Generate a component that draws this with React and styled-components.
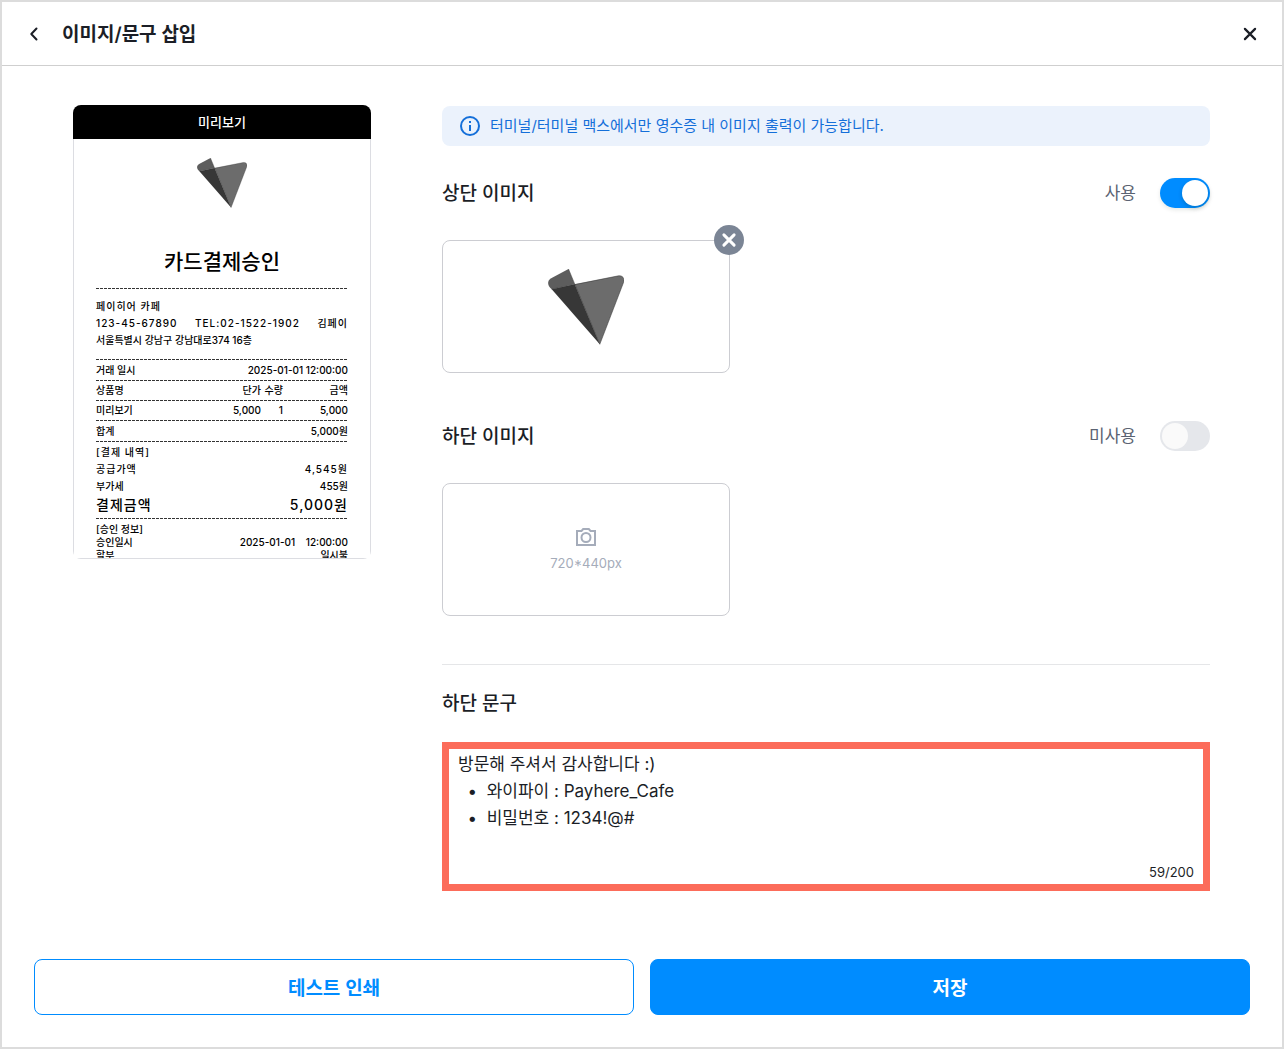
import React, { useState } from 'react';
import styled, { createGlobalStyle } from 'styled-components';

const MAX_LENGTH = 200;
const BLUE = '#008cff';
const INK = '#1b1e26';

const INITIAL_MESSAGE = [
  '방문해 주셔서 감사합니다 :)',
  '  •  와이파이 : Payhere_Cafe',
  '  •  비밀번호 : 1234!@#',
].join('\n');

const GlobalStyle = createGlobalStyle`
  *, *::before, *::after {
    box-sizing: border-box;
  }

  body {
    margin: 0;
    background: #fff;
    color: ${INK};
    font-family: Inter, 'Noto Sans CJK KR', sans-serif;
  }

  button, textarea {
    font-family: inherit;
    color: inherit;
  }

  h1, h2, p {
    margin: 0;
  }
`;

const Logo = ({ size }) => (
  <svg width={size} height={size} viewBox="0 1 76 76" aria-hidden="true">
    <path
      d="M20.5 1 L26.7 16.3 L3.7 21.2 C-1 17.5 -1 12.5 3.2 10.2 Z"
      fill="#5d5d5d"
    />
    <path
      d="M26.7 16.3 L70.5 7.8 C74.5 7.3 77 10.3 75.6 14.3 L51.8 76.3 Z"
      fill="#6c6c6c"
    />
    <path d="M3.7 21.2 L26.7 16.3 L51.8 76.3 Z" fill="#373737" />
    <path
      d="M20.5 1 L51.8 76.3 L75.6 14.3 C77 10.3 74.5 7.3 70.5 7.8 L3.7 21.2"
      fill="none"
      stroke="#333"
      strokeWidth="0.5"
    />
  </svg>
);

const BackIcon = () => (
  <svg width="24" height="24" viewBox="0 0 24 24" fill="none" stroke={INK} strokeWidth="2">
    <path d="M14.5 6.5 L9.3 12 L14.5 17.5" strokeLinecap="round" strokeLinejoin="round" />
  </svg>
);

const CrossIcon = ({ width = 2.2 }) => (
  <svg width="24" height="24" viewBox="0 0 24 24" fill="none" stroke="currentColor" strokeWidth={width}>
    <path d="M6.9 6.9 L17.1 17.1 M17.1 6.9 L6.9 17.1" strokeLinecap="round" />
  </svg>
);

const InfoIcon = () => (
  <svg width="20" height="20" viewBox="0 0 20 20" fill="none" aria-hidden="true">
    <circle cx="10" cy="10" r="9" stroke="currentColor" strokeWidth="2" />
    <path d="M10 9 V15 M10 5 V7" stroke="currentColor" strokeWidth="2" />
  </svg>
);

const CameraIcon = () => (
  <svg width="20" height="18" viewBox="0 0 20 18" fill="none" stroke="currentColor" strokeWidth="2" aria-hidden="true">
    <path d="M1 3 H5.5 L7.2 1 H12.8 L14.5 3 H19 V17 H1 Z" />
    <circle cx="10" cy="9.5" r="4.5" />
  </svg>
);

const Frame = styled.div`
  display: flex;
  flex-direction: column;
  min-height: 100vh;
  border: 2px solid #dcdcdc;
`;

const Header = styled.header`
  display: flex;
  align-items: center;
  gap: 16px;
  height: 64px;
  padding: 0 20px;
  border-bottom: 1px solid #cfcfcf;
`;

const IconButton = styled.button`
  display: flex;
  padding: 0;
  border: none;
  background: none;
  cursor: pointer;
`;

const Title = styled.h1`
  flex: 1;
  padding-top: 2px;
  font-size: 19px;
  font-weight: 600;
  line-height: 30px;
`;

const Body = styled.main`
  flex: 1;
  display: flex;
  align-items: flex-start;
  gap: 71px;
  padding: 39px 72px 0 71px;
`;

const Preview = styled.section`
  flex: 0 0 298px;
  display: flex;
  flex-direction: column;
  max-height: 454px;
  border-radius: 8px;
  overflow: hidden;
`;

const PreviewTitle = styled.h2`
  flex: none;
  background: #000;
  color: #fff;
  font-size: 13px;
  font-weight: 500;
  line-height: 34px;
  text-align: center;
`;

const Receipt = styled.div`
  display: flex;
  flex-direction: column;
  min-height: 0;
  padding: 19px 22px 0;
  border: 1px solid #dcdde2;
  border-top: none;
  overflow: hidden;
  color: #000;
  font-size: 10px;
  font-weight: 500;

  > * {
    flex: none;
  }

  > svg {
    align-self: center;
  }
`;

const ReceiptTitle = styled.p`
  margin: 39px 0 11px;
  font-size: 21px;
  line-height: 30px;
  text-align: center;
`;

const Rule = styled.hr`
  width: 100%;
  height: 1px;
  margin: 0;
  border: none;
  background: repeating-linear-gradient(90deg, #333 0 3px, transparent 3px 4px);
`;

const Group = styled.div`
  padding: ${(props) => props.$padding || 0};
`;

const Line = styled.div`
  display: flex;
  justify-content: space-between;
  letter-spacing: ${(props) => (props.$tracked ? '1px' : 'normal')};
  font-size: ${(props) => (props.$large ? '14px' : 'inherit')};
  line-height: ${(props) => props.$height || 17}px;
`;

const Items = styled.table`
  width: 100%;
  border-collapse: collapse;
  table-layout: fixed;

  th, td {
    padding: 0;
    font-weight: 500;
    line-height: 19px;
    text-align: right;
  }

  th:first-child, td:first-child {
    text-align: left;
  }
`;

const Dashed = styled.tr`
  height: 1px;

  && td {
    line-height: 0;
  }
`;

const Settings = styled.div`
  flex: 1;
  min-width: 0;
  padding-top: 1px;
`;

const Notice = styled.p`
  display: flex;
  align-items: center;
  gap: 10px;
  padding: 0 18px;
  border-radius: 8px;
  background: #ebf2fc;
  color: #146fd9;
  font-size: 15px;
  line-height: 40px;
`;

const Section = styled.section`
  padding: 32px 0 ${(props) => props.$bottom || 0}px;
`;

const SectionHead = styled.div`
  display: flex;
  align-items: center;
  justify-content: space-between;
  height: 30px;
  margin-bottom: 32px;
`;

const SectionTitle = styled.h2`
  padding-top: 2px;
  font-size: 19px;
  font-weight: 500;
  line-height: 30px;
`;

const SwitchLabel = styled.label`
  display: flex;
  align-items: center;
  gap: 24px;
  color: #5b6372;
  font-size: 17px;
  line-height: 30px;
`;

const Switch = styled.input`
  appearance: none;
  display: flex;
  width: 50px;
  height: 30px;
  margin: 0;
  padding: 2px;
  border-radius: 15px;
  background: #e5e7eb;
  cursor: pointer;

  &::before {
    content: '';
    width: 26px;
    height: 26px;
    border-radius: 50%;
    background: #fafafa;
  }

  &:checked {
    justify-content: flex-end;
    background: ${BLUE};
    box-shadow: 0 2px 4px rgba(0, 35, 11, 0.1);
  }

  &:checked::before {
    background: #fff;
    box-shadow: 0 2px 4px rgba(0, 35, 11, 0.2);
  }
`;

const ImageSlot = styled.div`
  position: relative;
  width: 288px;
  height: 133px;
  border: 1px solid #cccdd2;
  border-radius: 8px;
`;

const SlotContent = styled.button`
  display: flex;
  flex-direction: column;
  align-items: center;
  justify-content: center;
  gap: 8px;
  width: 100%;
  height: 100%;
  padding: 0;
  border: none;
  background: none;
  color: #a5acba;
  font-size: 13px;
  line-height: 18px;
  cursor: pointer;
`;

const RemoveButton = styled.button`
  position: absolute;
  top: -16px;
  right: -15px;
  display: flex;
  align-items: center;
  justify-content: center;
  width: 30px;
  height: 30px;
  padding: 0;
  border: none;
  border-radius: 50%;
  background: #7b8595;
  color: #fff;
  cursor: pointer;
`;

const Divider = styled.hr`
  height: 1px;
  margin: 0;
  border: none;
  background: #e5e6e8;
`;

const MessageSection = styled.section`
  padding-top: 22px;
`;

const MessageTitle = styled(SectionTitle)`
  margin-bottom: 23px;
`;

const MessageBox = styled.div`
  display: flex;
  flex-direction: column;
  border: 7px solid #fc6c5a;
`;

const MessageInput = styled.textarea`
  display: block;
  width: 100%;
  padding: 2px 9px 0;
  border: none;
  outline: none;
  resize: none;
  overflow: hidden;
  background: none;
  font-size: 17px;
  line-height: 27px;
`;

const Counter = styled.p`
  padding: 3px 9px 2px;
  font-size: 13px;
  line-height: 20px;
  text-align: right;
`;

const Footer = styled.footer`
  display: flex;
  gap: 16px;
  padding: 32px;
`;

const ActionButton = styled.button`
  flex: 1;
  height: 56px;
  padding: 0 16px 2px;
  border: 1px solid ${BLUE};
  border-radius: 8px;
  background: ${(props) => (props.$primary ? BLUE : '#fff')};
  color: ${(props) => (props.$primary ? '#fff' : BLUE)};
  font-size: 19px;
  font-weight: 600;
  cursor: pointer;
`;

const ReceiptPreview = () => (
  <Preview>
    <PreviewTitle>미리보기</PreviewTitle>
    <Receipt>
      <Logo size={50} />
      <ReceiptTitle>카드결제승인</ReceiptTitle>
      <Rule />
      <Group $padding="9px 0 10px">
        <Line $tracked>페이히어 카페</Line>
        <Line $tracked>
          <span>123-45-67890</span>
          <span>TEL:02-1522-1902</span>
          <span>김페이</span>
        </Line>
        <Line>서울특별시 강남구 강남대로374 16층</Line>
      </Group>
      <Rule />
      <Line $height={20}>
        <span>거래 일시</span>
        <span>2025-01-01 12:00:00</span>
      </Line>
      <Rule />
      <Items>
        <colgroup>
          <col />
          <col width="60" />
          <col width="22" />
          <col width="65" />
        </colgroup>
        <thead>
          <tr>
            <th scope="col">상품명</th>
            <th scope="col">단가</th>
            <th scope="col">수량</th>
            <th scope="col">금액</th>
          </tr>
        </thead>
        <tbody>
          <Dashed>
            <td colSpan="4"><Rule /></td>
          </Dashed>
          <tr>
            <td>미리보기</td>
            <td>5,000</td>
            <td>1</td>
            <td>5,000</td>
          </tr>
        </tbody>
      </Items>
      <Rule />
      <Line $height={20}>
        <span>합계</span>
        <span>5,000원</span>
      </Line>
      <Rule />
      <Group $padding="2px 0 4px">
        <Line $tracked>[결제 내역]</Line>
        <Line $tracked>
          <span>공급가액</span>
          <span>4,545원</span>
        </Line>
        <Line>
          <span>부가세</span>
          <span>455원</span>
        </Line>
        <Line $tracked $large $height={19}>
          <span>결제금액</span>
          <span>5,000원</span>
        </Line>
      </Group>
      <Rule />
      <Group $padding="4px 0 0">
        <Line $height={13}>[승인 정보]</Line>
        <Line $height={13}>
          <span>승인일시</span>
          <span>2025-01-01 &nbsp;&nbsp; 12:00:00</span>
        </Line>
        <Line $height={13}>
          <span>할부</span>
          <span>일시불</span>
        </Line>
      </Group>
    </Receipt>
  </Preview>
);

const ImageSection = ({ title, enabled, onToggle, bottom, children }) => (
  <Section $bottom={bottom}>
    <SectionHead>
      <SectionTitle>{title}</SectionTitle>
      <SwitchLabel>
        {enabled ? '사용' : '미사용'}
        <Switch
          type="checkbox"
          role="switch"
          aria-label={title}
          checked={enabled}
          onChange={(ev) => onToggle(ev.target.checked)}
        />
      </SwitchLabel>
    </SectionHead>
    <ImageSlot>{children}</ImageSlot>
  </Section>
);

const App = () => {
  const [topEnabled, setTopEnabled] = useState(true);
  const [bottomEnabled, setBottomEnabled] = useState(false);
  const [message, setMessage] = useState(INITIAL_MESSAGE);
  const [count, setCount] = useState(59);

  const handleMessage = (ev) => {
    setMessage(ev.target.value);
    setCount(ev.target.value.length);
  };

  return (
    <Frame>
      <GlobalStyle />
      <Header>
        <IconButton type="button" aria-label="뒤로">
          <BackIcon />
        </IconButton>
        <Title>이미지/문구 삽입</Title>
        <IconButton type="button" aria-label="닫기">
          <CrossIcon />
        </IconButton>
      </Header>

      <Body>
        <ReceiptPreview />
        <Settings>
          <Notice>
            <InfoIcon />
            터미널/터미널 맥스에서만 영수증 내 이미지 출력이 가능합니다.
          </Notice>
          <ImageSection title="상단 이미지" enabled={topEnabled} onToggle={setTopEnabled} bottom={16}>
            <SlotContent type="button" aria-label="상단 이미지 변경">
              <Logo size={76} />
            </SlotContent>
            <RemoveButton type="button" aria-label="상단 이미지 삭제">
              <CrossIcon width={3} />
            </RemoveButton>
          </ImageSection>
          <ImageSection title="하단 이미지" enabled={bottomEnabled} onToggle={setBottomEnabled} bottom={48}>
            <SlotContent type="button">
              <CameraIcon />
              720*440px
            </SlotContent>
          </ImageSection>
          <Divider />
          <MessageSection>
            <MessageTitle id="message-title">하단 문구</MessageTitle>
            <MessageBox>
              <MessageInput
                rows={4}
                maxLength={MAX_LENGTH}
                aria-labelledby="message-title"
                spellCheck={false}
                value={message}
                onChange={handleMessage}
              />
              <Counter>{count}/{MAX_LENGTH}</Counter>
            </MessageBox>
          </MessageSection>
        </Settings>
      </Body>

      <Footer>
        <ActionButton type="button">테스트 인쇄</ActionButton>
        <ActionButton type="button" $primary>저장</ActionButton>
      </Footer>
    </Frame>
  );
};

export default App;
